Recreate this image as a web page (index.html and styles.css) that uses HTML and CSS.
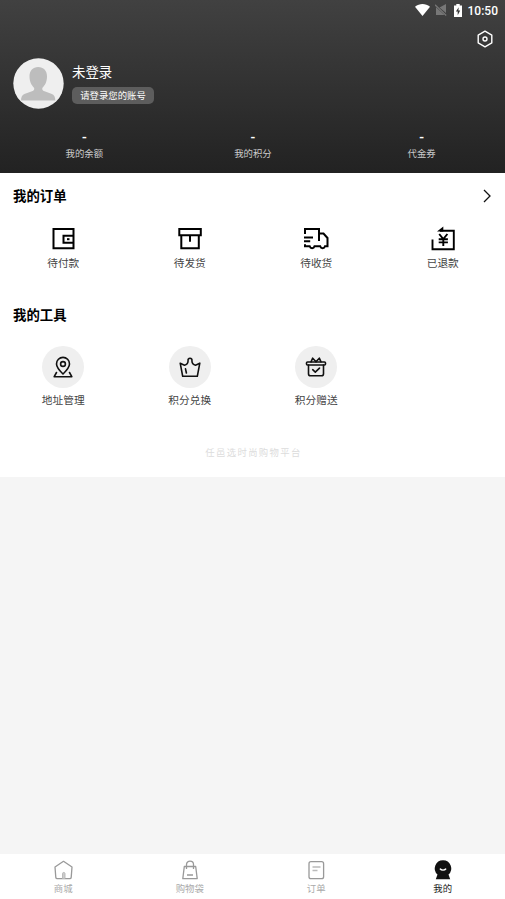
FILE: index.html
```html
<!DOCTYPE html>
<html lang="zh-CN">
<head>
<meta charset="utf-8">
<meta name="viewport" content="width=device-width">
<title>我的</title>
<link rel="stylesheet" href="styles.css">
</head>
<body>
<header class="hero">
  <div class="status">
    <svg class="wifi" viewBox="0 0 15 12"><path d="M0 2.7C4.5-.8 10.5-.8 15 2.7L7.5 12z" fill="#fff"/></svg>
    <svg class="signal" viewBox="0 0 12 12"><path d="M11 0v9L4.5 3.5zM1 3.2L9.5 11H1z" fill="#777"/><path d="M0 .8L11.2 11.5" stroke="#777" stroke-width="1.2"/></svg>
    <svg class="battery" viewBox="0 0 8 13"><path d="M2.3 0h3.4v1.4H8V13H0V1.400h2.300z" fill="#fff"/><path d="M4.7 3.2L1.9 7.5h1.8v3.7l2.5-4.8H4.4z" fill="#333"/></svg>
    <span class="clock">10:50</span>
  </div>
  <div class="toolbar">
    <svg class="settings" viewBox="0 0 16 18" fill="none" stroke="#fff" stroke-width="1.4" stroke-linejoin="round"><path d="M8 1.2l6.8 3.9v7.8L8 16.8l-6.8-3.9V5.1z"/><circle cx="8" cy="9" r="2"/></svg>
  </div>
  <div class="profile">
    <svg class="avatar" viewBox="0 0 51 51"><circle cx="25.5" cy="25.5" r="25.2" fill="#efefef"/><path d="M25.2 9c-5.2 0-8.8 3.8-8.7 9.5.1 5.500 2 8.500 4.500 11.200.8 1.600-.1 2.800-2 3.500L12 35.800c-3 1.200-4 3.400-4 6.700h34.300c0-3.300-.9-5.500-4-6.700l-6.800-2.600c-2-.7-2.800-1.900-2-3.500 2.600-2.700 4.400-5.700 4.500-11.200C34.100 12.800 30.500 9 25.200 9z" fill="#bdbdbd"/></svg>
    <div class="who">
      <div class="name">未登录</div>
      <div class="login">请登录您的账号</div>
    </div>
  </div>
  <div class="stats">
    <div class="stat"><b>-</b><span>我的余额</span></div>
    <div class="stat"><b>-</b><span>我的积分</span></div>
    <div class="stat"><b>-</b><span>代金券</span></div>
  </div>
</header>
<main>
  <section class="orders">
    <div class="heading"><h2>我的订单</h2>
      <svg class="arrow" viewBox="0 0 8 14"><path d="M1 1l6 6-6 6" fill="none" stroke="#111" stroke-width="1.3"/></svg>
    </div>
    <div class="grid">
      <div class="item">
        <svg class="icon" viewBox="0 0 26 26" fill="none" stroke="#000" stroke-width="2"><path d="M23 4H3.500v19.300H23.500V3M23 10.700H13.500v7H23"/><path d="M17 14.200h2.500"/></svg>
        <span>待付款</span></div>
      <div class="item">
        <svg class="icon" viewBox="0 0 26 26" fill="none" stroke="#000" stroke-width="2"><path d="M2.300 4h21.500v6.300H2.300zM4.300 10.500v12.800h17.500V10.500M13 10.500v6.200"/></svg>
        <span>待发货</span></div>
      <div class="item">
        <svg class="icon" viewBox="0 0 26 26" fill="none" stroke="#000" stroke-width="2"><path d="M2 9V4h14v12M16 8.500h4.500l4 4.500v8.200h-2.500c-.8 2.600-4 2.600-4.800 0h-5.700c-.8 2.600-4 2.600-4.800 0H2v-2M1 12.500h9M1 16.300h6.200"/></svg>
        <span>待收货</span></div>
      <div class="item">
        <svg class="icon" viewBox="0 0 26 26" fill="none" stroke="#000" stroke-width="1.900"><path d="M2.500 14.500v9.700h21.300V5.700H10"/><path d="M7 6.600L13.300 1.500v5.100z" fill="#000" stroke="none"/><path d="M9.200 9l4.100 5 4.100-5M13.300 13.700v7.200M8.700 14.200h9.200M8.700 17.400h9.200"/></svg>
        <span>已退款</span></div>
    </div>
  </section>
  <section class="tools">
    <div class="heading"><h2>我的工具</h2></div>
    <div class="grid">
      <div class="item"><div class="disc">
        <svg viewBox="0 0 22 22" fill="none" stroke="#111" stroke-width="1.600" stroke-linejoin="round" stroke-linecap="round"><path d="M11 18C7.500 14.500 4.500 11.500 4.500 7.900a6.500 6.500 0 0 1 13 0c0 3.600-3 6.600-6.500 10.100z"/><circle cx="11" cy="8" r="2.400"/><path d="M4.500 16.500L2.200 20.700h17.600l-2.300-4.200"/></svg>
      </div><span>地址管理</span></div>
      <div class="item"><div class="disc">
        <svg viewBox="0 0 22 22" fill="none" stroke="#111" stroke-width="1.600" stroke-linejoin="round" stroke-linecap="round"><path d="M1.200 7.200L5.500 9.200C8 8.700 9 7.200 9.100 4.800a2 2 0 1 1 3.800 0c.1 2.400 1.100 3.900 3.600 4.400l4.300-2L18.300 20.300H3.700zM6.500 12.800l.9 4.200"/></svg>
      </div><span>积分兑换</span></div>
      <div class="item"><div class="disc">
        <svg viewBox="0 0 22 22" fill="none" stroke="#111" stroke-width="1.600" stroke-linejoin="round" stroke-linecap="round"><rect x="1.500" y="6" width="19" height="3" rx="1"/><path d="M3.500 9v8.700c0 1.400.7 2.100 2.100 2.100h10.800c1.400 0 2.100-.7 2.100-2.100V9M11 5.800L7.700 2.200 6 5.800M11 5.800l3.300-3.600L16 5.800M7.700 13.700l2.600 2.400 4.200-4"/></svg>
      </div><span>积分赠送</span></div>
    </div>
  </section>
  <div class="slogan">任邑选时尚购物平台</div>
</main>
<nav class="tabs">
  <div class="tab">
    <svg viewBox="0 0 20 20" fill="none" stroke="#999" stroke-width="1.300" stroke-linejoin="round"><path d="M10.500 1.300L2 7l.8 10.400c.1.900.5 1.300 1.400 1.300h12.600c.9 0 1.300-.4 1.400-1.300L19 7z"/><path d="M9.500 18.500v-5c0-1.400 2.500-1.400 2.500 0v5z" fill="#ccc" stroke="#bbb" stroke-width="1"/></svg>
    <span>商城</span></div>
  <div class="tab">
    <svg viewBox="0 0 20 20" fill="none" stroke="#999" stroke-width="1.300" stroke-linejoin="round"><path d="M4.300 6.500h11.400l1.500 12.200H2.800zM6.500 9V4.500c0-4.500 7-4.500 7 0V9M7 15h6"/></svg>
    <span>购物袋</span></div>
  <div class="tab">
    <svg viewBox="0 0 20 20" fill="none" stroke="#999" stroke-width="1.300"><rect x="3" y="1.700" width="14.600" height="17" rx="2"/><path d="M6.500 7h8M6.500 10.500h5" stroke="#bbb"/></svg>
    <span>订单</span></div>
  <div class="tab active">
    <svg viewBox="0 0 20 20"><path d="M10 .2a8.200 8.200 0 0 1 5.500 14.300l1.700 4.800H2.800l1.700-4.800A8.200 8.200 0 0 1 10 .2z" fill="#111"/><path d="M7.300 9c1 1.500 4.400 1.500 5.400 0" fill="none" stroke="#fff" stroke-width="1.400" stroke-linecap="round"/></svg>
    <span>我的</span></div>
</nav>
</body>
</html>
```
FILE: styles.css
```css
* { box-sizing: border-box; }
body {
  margin: 0;
  height: 899px;
  display: flex;
  flex-direction: column;
  background: #f5f5f5;
  font-family: "Noto Sans CJK SC", sans-serif;
  color: #222;
  overflow: hidden;
}
svg { display: block; flex: none; }
.hero {
  height: 173px;
  background: linear-gradient(#414141, #222);
  color: #fff;
}
.status {
  height: 20px;
  padding-right: 7px;
  display: flex;
  justify-content: flex-end;
  align-items: center;
}
.wifi { width: 15px; height: 12px; margin-right: 5px; }
.signal { width: 12px; height: 12px; margin-right: 7px; }
.battery { width: 8px; height: 13px; margin-right: 6px; }
.clock { padding-top: 1px; font: 500 12px/18px Roboto, sans-serif; }
.toolbar {
  height: 38px;
  padding: 10px 12px 0 0;
  display: flex;
  justify-content: flex-end;
}
.settings { width: 16px; height: 18px; }
.profile { height: 51px; padding-left: 13px; display: flex; }
.avatar { width: 51px; height: 51px; margin-right: 8px; }
.name { height: 29px; font-size: 13.4px; line-height: 27px; }
.login {
  width: 82px;
  height: 17px;
  border-radius: 5px;
  background: #5d5d5d;
  font-size: 9.4px;
  line-height: 16px;
  text-align: center;
  white-space: nowrap;
}
.stats { width: 506px; display: grid; grid-template-columns: repeat(3, 1fr); padding-top: 19px; }
.stat { display: flex; flex-direction: column; align-items: center; }
.stat b { height: 18px; font: 500 14px/18px Roboto, sans-serif; }
.stat span { font-size: 9.4px; line-height: 14px; color: #ccc; }
main { height: 304px; background: #fff; }
.orders { height: 119px; }
.tools { height: 149px; }
.heading {
  height: 46px;
  padding: 0 14px 0 13px;
  display: flex;
  justify-content: space-between;
  align-items: center;
}
.heading h2 { margin: 0; padding-bottom: 2px; font-size: 13.4px; line-height: 20px; font-weight: 700; color: #000; }
.arrow { width: 8px; height: 14px; margin-bottom: 1px; }
.grid { width: 506px; display: grid; grid-template-columns: repeat(4, 1fr); }
.item { display: flex; flex-direction: column; align-items: center; }
.item span { font-size: 10.7px; line-height: 16px; color: #444; }
.icon { width: 26px; height: 26px; margin: 6px 0 4px; }
.tools .grid { padding-top: 8px; }
.disc {
  width: 42px;
  height: 42px;
  margin-bottom: 4px;
  border-radius: 50%;
  background: #efefef;
  display: flex;
  align-items: center;
  justify-content: center;
}
.disc svg { width: 22px; height: 22px; }
.slogan {
  padding-left: 2px;
  font-size: 9.4px;
  line-height: 22px;
  letter-spacing: 1.33px;
  text-align: center;
  color: #dcdcdc;
}
.tabs {
  width: 506px;
  height: 45px;
  margin-top: auto;
  padding-top: 6px;
  background: #fff;
  display: grid;
  grid-template-columns: repeat(4, 1fr);
}
.tab { display: flex; flex-direction: column; align-items: center; color: #aaa; }
.tab svg { width: 20px; height: 20px; }
.tab span { font-size: 9.4px; line-height: 16px; }
.tab.active { color: #222; }
```
